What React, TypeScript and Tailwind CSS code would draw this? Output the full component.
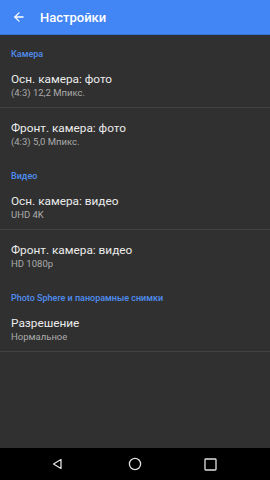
import { ArrowLeft } from 'lucide-react';

type Item = { title: string; value: string };
type Section = { name: string; items: Item[] };

const sections: Section[] = [
  {
    name: 'Камера',
    items: [
      { title: 'Осн. камера: фото', value: '(4:3) 12,2 Мпикс.' },
      { title: 'Фронт. камера: фото', value: '(4:3) 5,0 Мпикс.' },
    ],
  },
  {
    name: 'Видео',
    items: [
      { title: 'Осн. камера: видео', value: 'UHD 4K' },
      { title: 'Фронт. камера: видео', value: 'HD 1080p' },
    ],
  },
  {
    name: 'Photo Sphere и панорамные снимки',
    items: [{ title: 'Разрешение', value: 'Нормальное' }],
  },
];

export default function App() {
  return (
    <div className="w-[270px] h-[480px] bg-[#303030] flex flex-col font-['Roboto',sans-serif] overflow-hidden">
      {/* App bar */}
      <div className="h-[35px] bg-[#4285f4] border-b border-[#3a73d6] flex items-center shrink-0">
        <ArrowLeft className="ml-[12px] text-white" size={14} strokeWidth={2.2} />
        <h1 className="ml-[14px] text-white text-[13px] font-medium leading-none">Настройки</h1>
      </div>

      <main className="flex-1 flex flex-col">
        {sections.map(section => (
          <div key={section.name}>
            <div className="h-[24px] px-[11px] pt-[14px] text-[9px] leading-[11px] font-medium text-[#4f8ef0]">
              {section.name}
            </div>
            {section.items.map((item, i) => (
              <div
                key={item.title}
                className={`h-[49px] px-[11px] pt-[13px] ${
                  i < section.items.length - 1 || section.items.length === 1 ? 'border-b border-[#424242]' : ''
                }`}
              >
                <p className="text-[11.8px] leading-[14px] text-[#ececec]">{item.title}</p>
                <p className="text-[9.5px] leading-[14px] text-[#ababab]">{item.value}</p>
              </div>
            ))}
          </div>
        ))}
      </main>

      {/* Nav bar */}
      <div className="h-[32px] bg-black flex items-center pl-[51px] shrink-0">
        <svg width="12" height="12" viewBox="0 0 12 12">
          <path d="M10 1.5 L2.5 6 L10 10.5 Z" fill="none" stroke="#e0e0e0" strokeWidth="1.3" strokeLinejoin="round" />
        </svg>
        <svg width="14" height="14" viewBox="0 0 14 14" className="ml-[65px]">
          <circle cx="7" cy="7" r="5.6" fill="none" stroke="#e0e0e0" strokeWidth="1.3" />
        </svg>
        <svg width="13" height="13" viewBox="0 0 13 13" className="ml-[62px]">
          <rect x="1" y="1" width="11" height="11" rx="0.8" fill="none" stroke="#e0e0e0" strokeWidth="1.3" />
        </svg>
      </div>
    </div>
  );
}
